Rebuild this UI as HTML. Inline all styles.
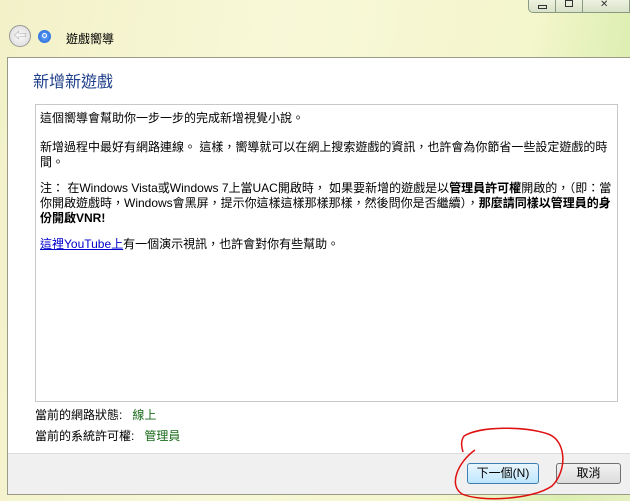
<!DOCTYPE html>
<html><head><meta charset="utf-8"><style>
*{margin:0;padding:0;box-sizing:border-box}
body{width:630px;height:501px;overflow:hidden;position:relative;font-family:"Liberation Sans","Noto Sans CJK TC",sans-serif;font-size:12px;background:linear-gradient(100deg,#f2f1c8 0%,#f8f8d8 40%,#f4f6cc 75%,#dbeeb0 90%,#e4f0bf 100%)}
.abs{position:absolute}
#panel{left:7px;top:57px;width:623px;height:438px;background:#fff;border:1px solid #9a9a88;border-right:none}
#foot{left:8px;top:453px;width:622px;height:41px;background:#f0f0f0;border-top:1px solid #dcdcdc}
#box{left:35px;top:104px;width:583px;height:298px;border:1px solid #c8c8c8;background:#fff;padding:6px 4px;line-height:15px;color:#000}
#box p{margin-bottom:11px}
#box p.f{margin-bottom:14px}
.btn{height:21px;border:1px solid #707070;border-radius:3px;background:linear-gradient(#f2f2f2,#dcdcdc);text-align:center;line-height:19px;font-size:12px}
</style></head><body>
<div class="abs" style="left:528px;top:0;width:102px;height:13px;border:1px solid #8a9a80;border-top:none;border-radius:0 0 0 5px;background:linear-gradient(#eef2e0,#d8e2c8)"></div>
<div class="abs" style="left:555px;top:0;width:1px;height:13px;background:#8a9a80"></div>
<div class="abs" style="left:582px;top:0;width:1px;height:13px;background:#8a9a80"></div>
<div class="abs" style="left:538px;top:5px;width:9px;height:4px;border:1px solid #333"></div>
<div class="abs" style="left:565px;top:0px;width:8px;height:7px;border:1px solid #333"></div>
<div class="abs" style="left:600px;top:-1px;font-size:10px;color:#333">✕</div>
<div class="abs" style="left:9px;top:25px;width:22px;height:22px;border-radius:50%;border:1px solid #999;background:radial-gradient(#fafafa,#d8d8d8);color:#aaa;font-size:13px;text-align:center;line-height:20px">⇦</div>
<div class="abs" style="left:38px;top:30px;width:13px;height:13px;border-radius:50%;background:radial-gradient(#6aa8ff,#1a5fd0);"></div>
<div class="abs" style="left:42px;top:33px;width:5px;height:5px;border-radius:50%;border:1.5px solid #fff"></div>
<div class="abs" style="left:66px;top:30px;font-size:12px;color:#000">遊戲嚮導</div>
<div id="panel" class="abs"></div>
<div class="abs" style="left:33px;top:68px;font-size:16px;color:#1e3f8a">新增新遊戲</div>
<div id="box" class="abs">
<p class="f">這個嚮導會幫助你一步一步的完成新增視覺小說。</p>
<p>新增過程中最好有網路連線。 這樣，嚮導就可以在網上搜索遊戲的資訊，也許會為你節省一些設定遊戲的時間。</p>
<p>注： 在Windows Vista或Windows 7上當UAC開啟時， 如果要新增的遊戲是以<b>管理員許可權</b>開啟的，（即：當你開啟遊戲時，Windows會黑屏，提示你這樣這樣那樣那樣，然後問你是否繼續），<b>那麼請同樣以管理員的身份開啟VNR!</b></p>
<p><a style="color:#0000cc;text-decoration:underline">這裡YouTube上</a>有一個演示視訊，也許會對你有些幫助。</p>
</div>
<div class="abs" style="left:35px;top:406px">當前的網路狀態: &nbsp;&nbsp;<span style="color:#1a6a1a">線上</span></div>
<div class="abs" style="left:35px;top:427px">當前的系統許可權: &nbsp;&nbsp;<span style="color:#1a6a1a">管理員</span></div>
<div id="foot" class="abs"></div>
<div class="abs btn" style="left:467px;top:463px;width:72px;border-color:#3c7fb1;background:linear-gradient(#eaf6fd,#bee6fd)">下一個(N)</div>
<div class="abs btn" style="left:556px;top:463px;width:65px">取消</div>
<svg class="abs" style="left:0;top:0" width="630" height="501"><path d="M475 450 C458 462 448 485 462 494 C480 502 532 500 552 486 C568 470 566 440 548 434 C525 426 480 426 464 436 C460 442 462 448 463 452" fill="none" stroke="#e01010" stroke-width="1.5"/></svg>
</body></html>
